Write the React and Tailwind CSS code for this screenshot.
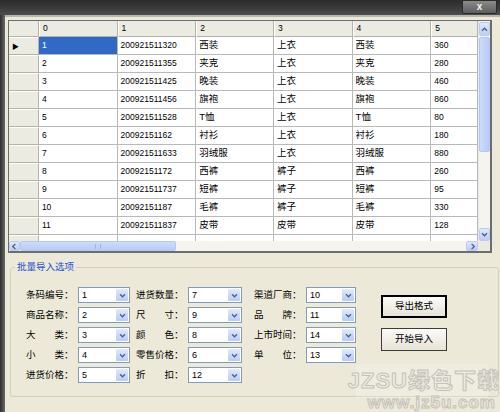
import React from 'react';

const rows = [
  ['1', '200921511320', '西装', '上衣', '西装', '360'],
  ['2', '200921511355', '夹克', '上衣', '夹克', '280'],
  ['3', '200921511425', '晚装', '上衣', '晚装', '460'],
  ['4', '200921511456', '旗袍', '上衣', '旗袍', '860'],
  ['5', '200921511528', 'T恤', '上衣', 'T恤', '80'],
  ['6', '20092151162', '衬衫', '上衣', '衬衫', '180'],
  ['7', '200921511633', '羽绒服', '上衣', '羽绒服', '880'],
  ['8', '20092151172', '西裤', '裤子', '西裤', '260'],
  ['9', '200921511737', '短裤', '裤子', '短裤', '95'],
  ['10', '20092151187', '毛裤', '裤子', '毛裤', '330'],
  ['11', '200921511837', '皮带', '皮带', '皮带', '128'],
  ['', '', '', '', '', ''],
];

const widths = ['w-[79px]', 'w-[79px]', 'w-[78px]', 'w-[79px]', 'w-[79px]', 'w-[47px]'];

const isCjk = (s) => /[\u4e00-\u9fff]/.test(s);

const Chevron = ({ dir = 'down', className = '' }) => {
  const d = {
    down: 'M1 1.5 L4 4.5 L7 1.5',
    up: 'M1 4.5 L4 1.5 L7 4.5',
    left: 'M5 1 L2 4 L5 7',
    right: 'M3 1 L6 4 L3 7',
  }[dir];
  const box = dir === 'left' || dir === 'right' ? '0 0 8 8' : '0 0 8 6';
  return (
    <svg viewBox={box} className={className} fill="none" stroke="#4d6185" strokeWidth="1.6">
      <path d={d} />
    </svg>
  );
};

const ScrollBtn = ({ dir, className = '' }) => (
  <div className={`flex items-center justify-center rounded-[2px] border border-[#b9ccf4] bg-gradient-to-b from-[#dfe8fd] to-[#bccdf6] ${className}`}>
    <Chevron dir={dir} className={dir === 'left' || dir === 'right' ? 'w-[7px] h-[7px]' : 'w-[7px] h-[5px]'} />
  </div>
);

const Combo = ({ value, w }) => (
  <div className={`h-[16px] ${w} flex border border-[#7f9db9] bg-white`}>
    <span className="flex-1 pl-[3px] leading-[14px] text-[9px] text-black">{value}</span>
    <div className="w-[12px] m-[1px] flex items-center justify-center rounded-[1px] bg-gradient-to-b from-[#e1eafe] to-[#b7cbf7]">
      <Chevron dir="down" className="w-[7px] h-[5px]" />
    </div>
  </div>
);

const Field = ({ label, value, w }) => (
  <div className="flex items-center h-[16px]">
    <span className="w-[52px] text-[9.5px] text-black whitespace-pre">{label}</span>
    <Combo value={value} w={w} />
  </div>
);

const DataGrid = () => (
  <div className="w-[484px] h-[233px] border border-[#6d6d6d] border-b-2 border-r-2 bg-[#f4f3ee] flex flex-col">
    <div className="flex h-[220px]">
      <div className="w-[471px] overflow-hidden bg-white">
        <div className="flex h-[16px] bg-[#ecebe1]">
          <div className="w-[30px] border-r border-b border-[#b5b3a8]" />
          {widths.map((w, i) => (
            <div key={i} className={`${w} border-r border-b border-[#b5b3a8] border-l border-l-white pl-[3px] text-[8.5px] leading-[15px] text-black`}>
              {i}
            </div>
          ))}
        </div>
        {rows.map((r, ri) => (
          <div key={ri} className="flex h-[18px]">
            <div className="w-[30px] border-r border-b border-[#b5b3a8] bg-[#ecebe1] border-t border-t-white flex items-center pl-[3px]">
              {ri === 0 && <span className="text-[7px] text-black leading-none">▶</span>}
            </div>
            {r.map((c, ci) => {
              const sel = ri === 0 && ci === 0;
              return (
                <div
                  key={ci}
                  className={`${widths[ci]} border-r border-b border-[#b9b9b9] pl-[3px] flex items-center ${isCjk(c) ? 'text-[9.5px]' : 'text-[8.5px]'} ${sel ? 'bg-[#316ac5] text-white' : 'text-black'}`}
                >
                  {c}
                </div>
              );
            })}
          </div>
        ))}
      </div>
      <div className="w-[12px] flex flex-col bg-[#f5f4ef] border-l border-[#e8e7e0]">
        <ScrollBtn dir="up" className="h-[14px] mt-[1px]" />
        <div className="flex-1 flex flex-col pt-[1px]">
          <div className="h-[115px] rounded-[2px] border border-[#b3c8f3] bg-gradient-to-r from-[#cddbfc] to-[#b8cbf6]" />
        </div>
        <ScrollBtn dir="down" className="h-[13px]" />
      </div>
    </div>
    <div className="flex h-[11px]">
      <div className="w-[471px] flex bg-[#f5f4ef]">
        <ScrollBtn dir="left" className="w-[11px]" />
        <div className="flex-1 flex">
          <div className="w-[156px] rounded-[2px] border border-[#b3c8f3] bg-gradient-to-b from-[#cddbfc] to-[#b8cbf6] flex items-center justify-center">
            <div className="w-[6px] h-[5px] border-x border-[#9fb5e6]" />
          </div>
        </div>
        <ScrollBtn dir="right" className="w-[12px]" />
      </div>
      <div className="w-[12px] bg-[#ecebe1]" />
    </div>
  </div>
);

const App = () => {
  return (
    <div className="w-[500px] h-[412px] overflow-hidden relative flex flex-col bg-[#3b3b3b] font-['Liberation_Sans','Noto_Sans_CJK_SC',sans-serif]">
      <div className="h-[15px] flex justify-end bg-gradient-to-b from-[#2c2c2c] via-[#3a3a3a] to-[#4d4d4d]">
        <div className="w-[35px] h-[14px] mr-[3px] rounded-b-[2px] border border-[#2a2a2a] bg-gradient-to-b from-[#8a8a8a] to-[#5e5e5e] flex items-center justify-center">
          <span className="text-[10px] font-bold leading-none text-[#f2f2f2]">x</span>
        </div>
      </div>
      <div className="flex flex-1">
        <div className="w-[5px] bg-gradient-to-r from-[#2e2e2e] to-[#6b6b6b]" />
        <div className="flex-1 flex flex-col bg-[#ece9d8] border-t-2 border-[#b9b7ad] pt-[3px] pl-[3px]">
          <DataGrid />

          <div className="relative mt-[14px] ml-[2px] w-[489px] h-[130px] rounded-[3px] border border-[#d0d0bf]">
            <span className="absolute -top-[7px] left-[4px] px-[2px] bg-[#ece9d8] text-[9.5px] leading-[12px] text-[#1f51d3]">
              批量导入选项
            </span>
            <div className="flex pt-[19px] pl-[15px]">
              <div className="flex flex-col gap-[4px]">
                <Field label="条码编号：" value="1" w="w-[52px]" />
                <Field label="商品名称：" value="2" w="w-[52px]" />
                <Field label="大　　类：" value="3" w="w-[52px]" />
                <Field label="小　　类：" value="4" w="w-[52px]" />
                <Field label="进货价格：" value="5" w="w-[52px]" />
              </div>
              <div className="flex flex-col gap-[4px] ml-[6px]">
                <Field label="进货数量：" value="7" w="w-[54px]" />
                <Field label="尺　　寸：" value="9" w="w-[54px]" />
                <Field label="颜　　色：" value="8" w="w-[54px]" />
                <Field label="零售价格：" value="6" w="w-[54px]" />
                <Field label="折　　扣：" value="12" w="w-[54px]" />
              </div>
              <div className="flex flex-col gap-[4px] ml-[12px]">
                <Field label="渠道厂商：" value="10" w="w-[50px]" />
                <Field label="品　　牌：" value="11" w="w-[50px]" />
                <Field label="上市时间：" value="14" w="w-[50px]" />
                <Field label="单　　位：" value="13" w="w-[50px]" />
              </div>
              <div className="flex flex-col ml-[25px] mt-[8px] gap-[10px]">
                <div className="w-[66px] h-[23px] border-2 border-black bg-gradient-to-b from-[#fbfbf8] to-[#e6e3d6] flex items-center justify-center text-[9.5px] text-black">
                  导出格式
                </div>
                <div className="w-[66px] h-[23px] border border-[#3c3c3c] bg-gradient-to-b from-[#fbfbf8] to-[#e6e3d6] flex items-center justify-center text-[9.5px] text-black">
                  开始导入
                </div>
              </div>
            </div>
          </div>
        </div>
      </div>

      <div className="absolute right-[12px] bottom-[14px] w-[132px] h-[34px] bg-white/20" />
      <div className="absolute right-0 bottom-[20px] text-[22px] font-bold leading-none tracking-[1px] text-[#ecebe4] [-webkit-text-stroke:1px_#c4c2b8]">
        JZSU绿色下载
      </div>
      <div className="absolute right-[4px] bottom-[1px] text-[17px] font-bold leading-none tracking-[1px] text-[#ecebe4] [-webkit-text-stroke:1px_#c4c2b8]">
        www.jz5u.com
      </div>
    </div>
  );
};

export default App;
